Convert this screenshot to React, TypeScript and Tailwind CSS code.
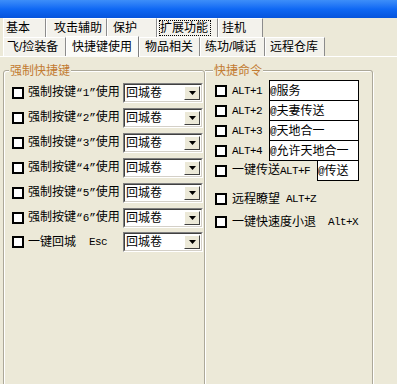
import React from "react";

const mono = "font-['Liberation_Mono',monospace]";
const alt = mono + " text-[11px] tracking-[-0.6px]";

function Check() {
  return <div className="h-[12px] w-[12px] shrink-0 border-2 border-black bg-white" />;
}

function Combo() {
  return (
    <div className="flex h-[20px] w-[80px] shrink-0 border border-t-[#808080] border-l-[#808080] border-r-white border-b-white">
      <div className="flex flex-1 items-center border border-t-[#404040] border-l-[#404040] border-r-[#d4d0c8] border-b-[#d4d0c8] bg-white pr-px">
        <span className="flex-1 pl-[1px] leading-[14px] whitespace-nowrap">回城卷</span>
        <div className="flex h-[14px] w-[16px] items-center justify-center border border-t-white border-l-white border-r-[#404040] border-b-[#404040] bg-[#ece9d8]">
          <svg width="7" height="4" viewBox="0 0 7 4">
            <path d="M0 0h7L3.5 4z" fill="#000" />
          </svg>
        </div>
      </div>
    </div>
  );
}

type TabProps = { label: string; w: number; pl: number; selected?: boolean; focus?: boolean };

function Tab({ label, w, pl, selected, focus }: TabProps) {
  return (
    <div
      style={{ width: w, paddingLeft: pl }}
      className={
        selected
          ? "relative z-10 -mb-px flex h-[21px] items-center border-l border-t border-r border-l-white border-t-white border-r-[#808080] bg-[#fbfbf8]"
          : "flex h-[19px] items-center border-l border-t border-r border-l-white border-t-white border-r-[#8c8c8c] bg-[#f3f2ec]"
      }
    >
      <span
        className={
          focus
            ? "border border-dotted border-black pr-[2px] leading-[14px] whitespace-nowrap"
            : "leading-[14px] whitespace-nowrap"
        }
      >
        {label}
      </span>
    </div>
  );
}

const groupLabel = "-mt-[7px] self-start bg-[#ece9d8] px-[1px] leading-[14px] text-[#c27a30] whitespace-nowrap";

export default function App() {
  const keys = ["1", "2", "3", "4", "5", "6"];
  return (
    <div className="h-[384px] w-[397px] overflow-hidden bg-[#ece9d8] text-[12px] text-black font-['Liberation_Sans','Noto_Sans_CJK_SC',sans-serif]">
      {/* title bar */}
      <div className="h-[18px] bg-linear-to-b from-[#3d8ef9] via-[#0f68f4] to-[#0654dc]" />

      {/* tab row 1 */}
      <div className="flex h-[19px] items-end pl-[3px]">
        <Tab label="基本" w={43} pl={2} />
        <Tab label="攻击辅助" w={61} pl={7} />
        <Tab label="保护" w={50} pl={5} />
        <Tab label="扩展功能" w={61} pl={1} focus />
        <Tab label="挂机" w={45} pl={3} />
      </div>

      {/* tab row 2 */}
      <div className="flex h-[19px] items-end pl-[3px]">
        <Tab label="飞/捡装备" w={63} pl={3} />
        <Tab label="快捷键使用" w={73} pl={5} selected />
        <Tab label="物品相关" w={61} pl={5} />
        <Tab label="练功/喊话" w={65} pl={4} />
        <Tab label="远程仓库" w={60} pl={4} />
      </div>

      {/* tab page */}
      <div className="flex border-t border-t-white pl-[3px] pt-[13px]">
        {/* left group */}
        <div className="flex h-[330px] w-[202px] shrink-0 flex-col rounded-[3px] border border-[#aca899] shadow-[inset_1px_1px_0_#fff,1px_1px_0_#fff]">
          <span className={"ml-[5px] " + groupLabel}>强制快捷键</span>
          <div className="mt-[2px] flex flex-col">
            {keys.map((k) => (
              <div key={k} className="flex h-[25px] items-center pl-[8px] pr-[1px]">
                <Check />
                <span className="ml-[4px] flex-1 leading-[14px] whitespace-nowrap">
                  强制按键<span className={mono + " text-[11px]"}>“{k}”</span>使用
                </span>
                <Combo />
              </div>
            ))}
            <div className="flex h-[24px] items-center pl-[8px] pr-[1px]">
              <Check />
              <span className="ml-[4px] leading-[14px] whitespace-nowrap">一键回城</span>
              <span className={alt + " ml-[13px] flex-1 leading-[14px]"}>Esc</span>
              <Combo />
            </div>
          </div>
        </div>

        {/* right group */}
        <div className="flex h-[330px] w-[168px] shrink-0 flex-col rounded-r-[3px] border border-l-0 border-[#aca899] shadow-[inset_1px_1px_0_#fff,1px_1px_0_#fff]">
          <span className={"ml-[8px] " + groupLabel}>快捷命令</span>
          <div className="mt-[2px] flex flex-col">
            {[
              ["ALT+1", "服务"],
              ["ALT+2", "夫妻传送"],
              ["ALT+3", "天地合一"],
              ["ALT+4", "允许天地合一"],
            ].map(([k, v], i) => (
              <div key={k} className={(i > 0 ? "-mt-px " : "") + "flex h-[21px] items-center pl-[10px]"}>
                <Check />
                <span className={alt + " ml-[5px] w-[37px] leading-[14px] whitespace-nowrap"}>{k}</span>
                <div className="flex h-[21px] w-[90px] items-center border border-black bg-white leading-[14px] whitespace-nowrap">
                  <span className={mono + " text-[11px]"}>@</span>
                  {v}
                </div>
              </div>
            ))}
            <div className="-mt-px flex h-[21px] items-center pl-[10px]">
              <Check />
              <span className="ml-[5px] w-[85px] leading-[14px] whitespace-nowrap">
                一键传送<span className={alt}>ALT+F</span>
              </span>
              <div className="flex h-[21px] w-[42px] items-center border border-black bg-white leading-[14px] whitespace-nowrap">
                <span className={mono + " text-[11px]"}>@</span>传送
              </div>
            </div>
            <div className="mt-[7px] flex h-[21px] items-center pl-[10px]">
              <Check />
              <span className="ml-[5px] leading-[14px] whitespace-nowrap">远程瞭望</span>
              <span className={alt + " ml-[6px] leading-[14px]"}>ALT+Z</span>
            </div>
            <div className="mt-[2px] flex h-[21px] items-center pl-[10px]">
              <Check />
              <span className="ml-[5px] leading-[14px] whitespace-nowrap">一键快速度小退</span>
              <span className={alt + " ml-[12px] leading-[14px]"}>Alt+X</span>
            </div>
          </div>
        </div>
      </div>
    </div>
  );
}
